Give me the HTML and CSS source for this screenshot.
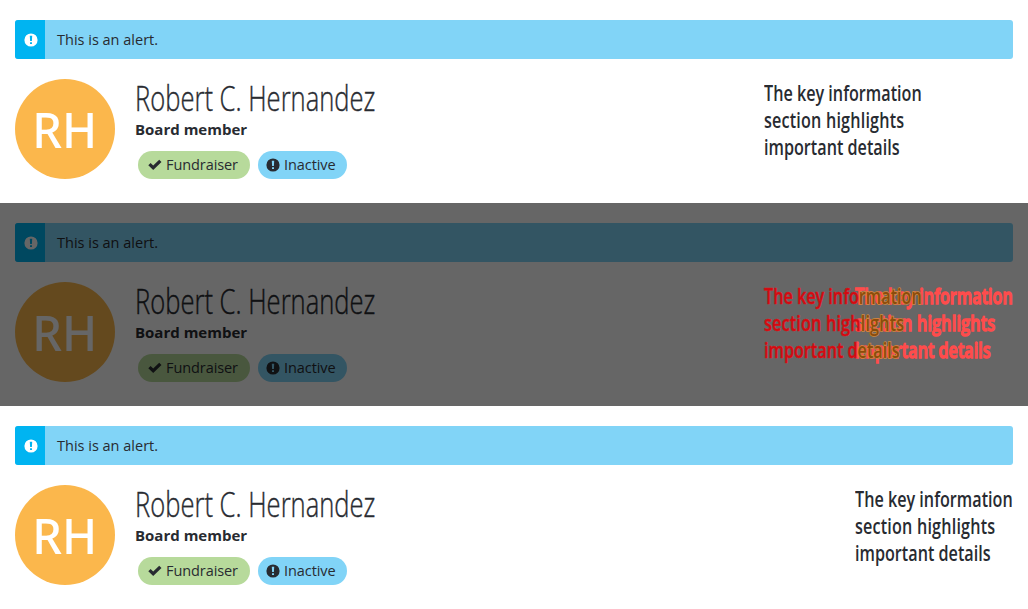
FILE: index.html
```html
<!DOCTYPE html>
<html lang="en">
<head>
<meta charset="utf-8">
<title>Constituent summary</title>
<link rel="stylesheet" href="styles.css">
</head>
<body>
<svg class="defs" width="0" height="0">
  <symbol id="info" viewBox="0 0 14 14"><path fill="currentColor" fill-rule="evenodd" d="M7 .4a6.6 6.6 0 1 1 0 13.2A6.6 6.6 0 0 1 7 .4zM5.8 2.7l.3 5.4h1.8l.3-5.4zM6 9.2v1.9h2V9.2z"/></symbol>
  <symbol id="check" viewBox="0 0 14 14"><path fill="currentColor" d="M.3 7.3 2.6 5 5.2 7.5 11.2 1.8 13.5 4.1 5.2 12.1z"/></symbol>
</svg>

<section class="panel">
  <div class="alert"><div class="alert-icon"><svg class="icon"><use href="#info"/></svg></div><div class="alert-text">This is an alert.</div></div>
  <div class="summary">
    <div class="avatar"><span class="initials">RH</span></div>
    <div class="info">
      <h1 class="name">Robert C. Hernandez</h1>
      <div class="role">Board member</div>
      <div class="labels">
        <span class="label success"><svg class="icon"><use href="#check"/></svg>Fundraiser</span>
        <span class="label neutral"><svg class="icon"><use href="#info"/></svg>Inactive</span>
      </div>
    </div>
    <div class="key start">The key information<br><span class="wide">section highlights</span><br>important details</div>
  </div>
</section>

<section class="panel compare">
  <div class="alert"><div class="alert-icon"><svg class="icon"><use href="#info"/></svg></div><div class="alert-text">This is an alert.</div></div>
  <div class="summary">
    <div class="avatar"><span class="initials">RH</span></div>
    <div class="info">
      <h1 class="name">Robert C. Hernandez</h1>
      <div class="role">Board member</div>
      <div class="labels">
        <span class="label success"><svg class="icon"><use href="#check"/></svg>Fundraiser</span>
        <span class="label neutral"><svg class="icon"><use href="#info"/></svg>Inactive</span>
      </div>
    </div>
    <div class="keys">
      <div class="key after">The key information<br><span class="wide">section highlights</span><br>important details</div>
      <div class="key before">The key info<span class="mix">rmation</span><br><span class="wide">section high<span class="mix">lights</span></span><br>important d<span class="mix">etails</span></div>
    </div>
  </div>
</section>

<section class="panel">
  <div class="alert"><div class="alert-icon"><svg class="icon"><use href="#info"/></svg></div><div class="alert-text">This is an alert.</div></div>
  <div class="summary">
    <div class="avatar"><span class="initials">RH</span></div>
    <div class="info">
      <h1 class="name">Robert C. Hernandez</h1>
      <div class="role">Board member</div>
      <div class="labels">
        <span class="label success"><svg class="icon"><use href="#check"/></svg>Fundraiser</span>
        <span class="label neutral"><svg class="icon"><use href="#info"/></svg>Inactive</span>
      </div>
    </div>
    <div class="key end">The key information<br><span class="wide">section highlights</span><br>important details</div>
  </div>
</section>
</body>
</html>
```
FILE: styles.css
```css
* { box-sizing: border-box; }
body {
  margin: 0;
  background: #fff;
  color: #282b31;
  font: 14.5px/20px "Open Sans", sans-serif;
}
.defs { display: block; }
.panel { position: relative; height: 203px; padding: 20px 15px; overflow: hidden; }
.icon { width: 14px; height: 14px; display: block; flex: none; }

.alert { display: flex; height: 39px; background: #81d4f7; border-radius: 3px; overflow: hidden; }
.alert-icon { width: 30px; display: flex; align-items: center; justify-content: center; padding-left: 1px; background: #00b4f1; color: #fff; }
.alert-text { padding: 10px 12px; }

.summary { display: flex; margin-top: 20px; }
.avatar { width: 100px; height: 100px; border-radius: 50%; background: #fbb74c; display: flex; align-items: center; justify-content: center; color: #fff; flex: none; }
.initials { font: 500 49px/1 "Noto Sans", sans-serif; transform: scaleX(.96); }
.info { width: 629px; padding-left: 20px; flex: none; }
.name { margin: 0; padding-top: 1px; height: 40px; width: max-content; font: 300 34px/36px "Open Sans", sans-serif; transform: scaleX(.752); transform-origin: 0 0; -webkit-text-stroke: .4px #282b31; }
.role { font: 700 15px/20px "Open Sans", sans-serif; }
.labels { display: flex; gap: 8px; margin: 12px 0 0 3px; }
.label { display: flex; align-items: center; gap: 4px; height: 28px; border-radius: 14px; padding: 0 0 1px 8px; letter-spacing: -.08px; }
.success { width: 112px; background: #b7da9b; padding-left: 10px; }
.neutral { width: 89px; background: #81d4f7; }

.key { width: 205px; height: 81px; margin-top: 1px; flex: none; font: 600 21px/27px "Open Sans", sans-serif; white-space: nowrap; transform: scaleX(.77); transform-origin: 0 0; }
.wide { letter-spacing: .24px; }
.start { margin-left: 19.5px; }
.end { margin-left: 110.5px; }

/* Dimmed panel with the two text positions laid over each other */
.compare::after { content: ""; position: absolute; inset: 0; background: rgba(0, 0, 0, .6); }
.keys { position: relative; z-index: 1; margin-left: 19.5px; }
.before { position: relative; color: #d00a10; -webkit-text-stroke: .5px #e01018; }
.after { position: absolute; left: 91px; top: 0; color: #ff4c4c; -webkit-text-stroke: 1.4px #ff4c4c; }
.mix { color: #8c4c0c; -webkit-text-stroke: 1.6px #d08a3c; paint-order: stroke fill; }
```
